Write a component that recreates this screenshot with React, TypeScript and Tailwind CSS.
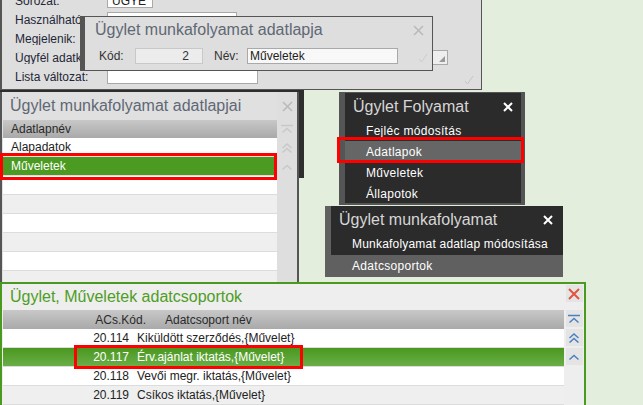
import React from "react";

const Chk = ({ c = "#c6c6c6" }: { c?: string }) => (
  <svg width="10" height="10" viewBox="0 0 10 10">
    <path d="M1 6l2.5 3L9 1" fill="none" stroke={c} strokeWidth="1" />
  </svg>
);

const ThinX = ({ c = "#b9b9b9" }: { c?: string }) => (
  <svg width="11" height="11" viewBox="0 0 11 11">
    <path d="M1 1l9 9M10 1l-9 9" fill="none" stroke={c} strokeWidth="1.5" />
  </svg>
);

const BoldX = () => (
  <svg width="10" height="10" viewBox="0 0 10 10">
    <path d="M1 1l8 8M9 1l-8 8" fill="none" stroke="#ffffff" strokeWidth="2" />
  </svg>
);

const RedX = () => (
  <svg width="12" height="12" viewBox="0 0 12 12">
    <path d="M1 1l10 10M11 1L1 11" fill="none" stroke="#e0553f" strokeWidth="2" />
  </svg>
);

const ScrollTop = ({ c }: { c: string }) => (
  <svg width="12" height="10" viewBox="0 0 12 10">
    <path d="M0 1.5h12" stroke={c} strokeWidth="1.5" />
    <path d="M1.5 8.5L6 4.5l4.5 4" fill="none" stroke={c} strokeWidth="1.5" />
  </svg>
);

const ScrollUp2 = ({ c }: { c: string }) => (
  <svg width="12" height="10" viewBox="0 0 12 10">
    <path d="M1.5 5L6 1l4.5 4M1.5 9.5L6 5.5l4.5 4" fill="none" stroke={c} strokeWidth="1.5" />
  </svg>
);

const ScrollUp = ({ c }: { c: string }) => (
  <svg width="12" height="8" viewBox="0 0 12 8">
    <path d="M1.5 6.5L6 2.5l4.5 4" fill="none" stroke={c} strokeWidth="1.5" />
  </svg>
);

const formRows = [
  { label: "Sorozat:", w: "w-[46px]", value: "UGYE" },
  { label: "Használható:", w: "w-[130px]", value: "" },
  { label: "Megjelenik:", w: "w-[130px]", value: "" },
  { label: "Ügyfél adatkezelés:", w: "w-[341px]", value: "", combo: true },
  { label: "Lista változat:", w: "w-[151px]", value: "" },
];

const lapRows = ["Alapadatok", "Műveletek", "", "", "", "", "", ""];

const csopRows = [
  ["20.114", "Kiküldött szerződés,{Művelet}"],
  ["20.117", "Érv.ajánlat iktatás,{Művelet}"],
  ["20.118", "Vevői megr. iktatás,{Művelet}"],
  ["20.119", "Csíkos iktatás,{Művelet}"],
];

export default function App() {
  return (
    <div className="relative w-[643px] h-[405px] overflow-hidden bg-[#e3efdc] font-['Liberation_Sans',Arial,sans-serif] text-[12px] leading-none text-[#222]">
      {/* form behind */}
      <div className="absolute left-0 top-0 w-[482px] h-[90px] bg-[#dedede] border-l-2 border-r border-b border-[#555]">
        <div className="flex flex-col mt-[-9px] pl-[13px]">
          {formRows.map((r) => (
            <div key={r.label} className="flex items-center h-[19px] shrink-0">
              <span className="w-[92px] shrink-0 whitespace-nowrap overflow-hidden text-[#1f2738]">{r.label}</span>
              <div className={`${r.w} h-[15px] flex items-center border border-[#a9a9a9] bg-white`}>
                <span className="flex-1 px-[4px] whitespace-nowrap overflow-hidden">{r.value}</span>
                {r.combo && (
                  <div className="w-[15px] h-full bg-[#eeeeee] border-l border-[#bbb] flex items-end justify-end p-[2px]">
                    <div className="w-0 h-0 border-l-[6px] border-l-transparent border-b-[6px] border-b-[#999]" />
                  </div>
                )}
              </div>
            </div>
          ))}
        </div>
        <div className="absolute right-[7px] bottom-[4px]">
          <Chk />
        </div>
      </div>

      {/* dialog: adatlapja */}
      <div className="absolute left-[80px] top-[16px] w-[353px] h-[55px] bg-[#dedede] border border-[#555] border-l-[5px]">
        <div className="flex items-center h-[26px] pl-[10px] pr-[8px]">
          <span className="flex-1 text-[16px] text-[#5f6875]">Ügylet munkafolyamat adatlapja</span>
          <ThinX />
        </div>
        <div className="flex items-center h-[16px] mt-[5px]">
          <span className="ml-[14px] w-[36px] text-[#333]">Kód:</span>
          <div className="w-[68px] h-[16px] border border-[#c8c8c8] bg-[#ececec] flex items-center justify-end pr-[13px] text-[#333]">2</div>
          <span className="ml-[11px] w-[33px] text-[#333]">Név:</span>
          <div className="w-[151px] h-[16px] border border-[#a9a9a9] bg-[#f8f8f8] flex items-center px-[2px]">Műveletek</div>
          <div className="ml-[20px] mt-[4px]">
            <Chk c="#cccccc" />
          </div>
        </div>
      </div>

      {/* dark window behind list */}
      <div className="absolute left-0 top-[90px] w-[304px] h-[88px] bg-[#2e2e2e]" />

      {/* list: adatlapjai */}
      <div className="absolute left-0 top-[92px] w-[299px] h-[190px] bg-[#e0e0e0] border-l-2 border-r-2 border-[#555] flex overflow-hidden">
        <div className="flex-1 flex flex-col">
          <div className="h-[28px] shrink-0 flex items-center pl-[8px] text-[16px] text-[#5f6875]">Ügylet munkafolyamat adatlapjai</div>
          <div className="ml-[1px] shrink-0 flex flex-col">
            <div className="h-[18px] shrink-0 flex items-center pl-[8px] bg-gradient-to-b from-[#c8c8c8] to-[#a9a9a9] text-[#2a2a2a]">Adatlapnév</div>
            {lapRows.map((t, i) => (
              <div
                key={i}
                className={`h-[19px] shrink-0 flex items-center pl-[8px] border-b border-[#dcdcdc] ${
                  i === 1 ? "bg-[#4b9a22] text-white" : i % 2 === 0 ? "bg-white" : "bg-[#efefef]"
                }`}
              >
                {t}
              </div>
            ))}
          </div>
        </div>
        <div className="w-[20px] shrink-0 bg-[#dedede] flex flex-col items-center">
          <div className="h-[28px] shrink-0 flex items-center">
            <ThinX />
          </div>
          <div className="h-[18px] shrink-0 flex items-center">
            <ScrollTop c="#c8c8c8" />
          </div>
          <div className="h-[19px] shrink-0 flex items-center">
            <ScrollUp2 c="#c8c8c8" />
          </div>
          <div className="h-[19px] shrink-0 flex items-center">
            <ScrollUp c="#c8c8c8" />
          </div>
        </div>
      </div>

      {/* menu: Ügylet Folyamat */}
      <div className="absolute left-[339px] top-[92px] w-[186px] h-[113px] bg-[#2b2b2b] border-l-[6px] border-r-[4px] border-t border-b-2 border-[#555] text-white">
        <div className="h-[27px] flex items-center pl-[8px] pr-[8px]">
          <span className="flex-1 text-[16px] text-[#d6d6d6]">Ügylet Folyamat</span>
          <BoldX />
        </div>
        {["Fejléc módosítás", "Adatlapok", "Műveletek", "Állapotok"].map((t) => (
          <div
            key={t}
            className={`h-[21px] flex items-center pl-[21px] tracking-[0.3px] ${t === "Adatlapok" ? "bg-[#666]" : ""}`}
          >
            {t}
          </div>
        ))}
      </div>

      {/* menu: Ügylet munkafolyamat */}
      <div className="absolute left-[325px] top-[206px] w-[238px] h-[71px] bg-[#606060] flex flex-col text-white">
        <div className="ml-[6px] bg-[#2b2b2b] flex flex-col">
          <div className="h-[27px] flex items-center pl-[8px] pr-[10px]">
            <span className="flex-1 text-[16px] text-[#d6d6d6]">Ügylet munkafolyamat</span>
            <BoldX />
          </div>
          <div className="h-[22px] flex items-center pl-[21px] tracking-[0.2px]">Munkafolyamat adatlap módosítása</div>
        </div>
        <div className="h-[22px] flex items-center pl-[27px] tracking-[0.3px]">Adatcsoportok</div>
      </div>

      {/* bottom: adatcsoportok */}
      <div className="absolute left-0 top-[282px] w-[586px] h-[123px] bg-[#eeeeee] border-t-2 border-l-2 border-r-2 border-[#4a9a20] flex">
        <div className="flex-1 flex flex-col">
          <div className="h-[26px] shrink-0 flex items-center pl-[8px] text-[16px] text-[#4f9d25]">Ügylet, Műveletek adatcsoportok</div>
          <div className="ml-[1px] shrink-0 flex flex-col">
            <div className="h-[19px] shrink-0 flex items-center bg-gradient-to-b from-[#c8c8c8] to-[#a9a9a9] text-[#2a2a2a]">
              <span className="w-[143px] shrink-0 text-right">ACs.Kód.</span>
              <span className="ml-[19px]">Adatcsoport név</span>
            </div>
            {csopRows.map(([k, n], i) => (
              <div
                key={k}
                className={`h-[19px] shrink-0 flex items-center border-b border-[#dcdcdc] ${
                  i === 1
                    ? "bg-gradient-to-b from-[#4a981e] to-[#6aae46] text-white"
                    : i % 2 === 0
                    ? "bg-white"
                    : "bg-[#efefef]"
                }`}
              >
                <span className="w-[126px] shrink-0 text-right">{k}</span>
                <span className="ml-[8px] whitespace-nowrap">{n}</span>
              </div>
            ))}
          </div>
        </div>
        <div className="w-[20px] shrink-0 flex flex-col items-center">
          <div className="h-[26px] shrink-0 pt-[1px]">
            <div className="w-[17px] h-[17px] bg-[#e4e4e4] flex items-center justify-center">
              <RedX />
            </div>
          </div>
          {[<ScrollTop c="#4a80c2" />, <ScrollUp2 c="#4a80c2" />, <ScrollUp c="#4a80c2" />].map((ic, i) => (
            <div key={i} className="w-[17px] h-[17px] shrink-0 mb-[2px] bg-[#e4e4e4] flex items-center justify-center">
              {ic}
            </div>
          ))}
        </div>
      </div>

      {/* highlight frames */}
      <div className="absolute left-0 top-[153px] w-[277px] h-[27px] border-[3px] border-[#ff0000]" />
      <div className="absolute left-[337px] top-[137px] w-[187px] h-[26px] border-[3px] border-[#ff0000]" />
      <div className="absolute left-[74px] top-[345px] w-[229px] h-[24px] border-[3px] border-[#ff0000]" />
    </div>
  );
}
